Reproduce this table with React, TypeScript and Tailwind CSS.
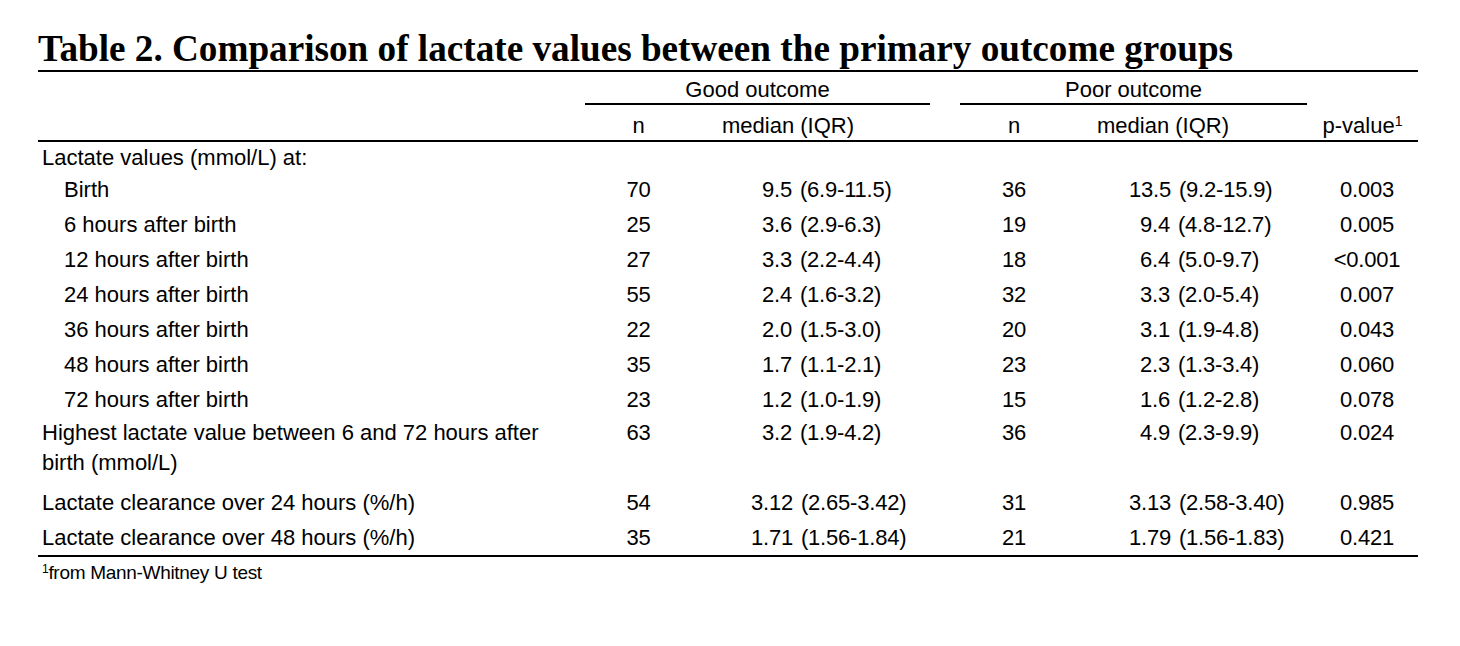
import React from "react";

type Row = {
  label: React.ReactNode;
  indent?: boolean;
  n1: string;
  m1: string;
  n2: string;
  m2: string;
  p: string;
  wide1?: boolean;
  wide2?: boolean;
};

const timeRows: Row[] = [
  { label: "Birth", indent: true, n1: "70", m1: "9.5 (6.9-11.5)", n2: "36", m2: "13.5 (9.2-15.9)", p: "0.003", wide2: true },
  { label: "6 hours after birth", indent: true, n1: "25", m1: "3.6 (2.9-6.3)", n2: "19", m2: "9.4 (4.8-12.7)", p: "0.005" },
  { label: "12 hours after birth", indent: true, n1: "27", m1: "3.3 (2.2-4.4)", n2: "18", m2: "6.4 (5.0-9.7)", p: "<0.001" },
  { label: "24 hours after birth", indent: true, n1: "55", m1: "2.4 (1.6-3.2)", n2: "32", m2: "3.3 (2.0-5.4)", p: "0.007" },
  { label: "36 hours after birth", indent: true, n1: "22", m1: "2.0 (1.5-3.0)", n2: "20", m2: "3.1 (1.9-4.8)", p: "0.043" },
  { label: "48 hours after birth", indent: true, n1: "35", m1: "1.7 (1.1-2.1)", n2: "23", m2: "2.3 (1.3-3.4)", p: "0.060" },
  { label: "72 hours after birth", indent: true, n1: "23", m1: "1.2 (1.0-1.9)", n2: "15", m2: "1.6 (1.2-2.8)", p: "0.078" },
];

const clearanceRows: Row[] = [
  { label: "Lactate clearance over 24 hours (%/h)", n1: "54", m1: "3.12 (2.65-3.42)", n2: "31", m2: "3.13 (2.58-3.40)", p: "0.985", wide1: true, wide2: true },
  { label: "Lactate clearance over 48 hours (%/h)", n1: "35", m1: "1.71 (1.56-1.84)", n2: "21", m2: "1.79 (1.56-1.83)", p: "0.421", wide1: true, wide2: true },
];

const cols = "grid grid-cols-[547px_107px_238px_30px_108px_239px_111px]";
const num = "tracking-[-0.2px] [word-spacing:2px]";

function DataRow({ row, className }: { row: Row; className: string }) {
  return (
    <div className={`${cols} ${className}`}>
      <div className={row.indent ? "pl-[26px]" : "pl-[4px]"}>{row.label}</div>
      <div className={`text-center ${num}`}>{row.n1}</div>
      <div className={`${num} ${row.wide1 ? "pl-[59px]" : "pl-[70px]"}`}>{row.m1}</div>
      <div />
      <div className={`text-center ${num}`}>{row.n2}</div>
      <div className={`${num} ${row.wide2 ? "pl-[61px]" : "pl-[72px]"}`}>{row.m2}</div>
      <div className={`text-center pl-[9px] ${num}`}>{row.p}</div>
    </div>
  );
}

export default function App() {
  return (
    <div className="min-h-screen w-full bg-white text-black">
      <div className="w-[1418px] pl-[38px] pt-[28px]">
        {/* title */}
        <h1 className="font-['Liberation_Serif',serif] font-bold text-[37.2px] leading-[42px] border-b-2 border-black whitespace-nowrap">
          Table 2. Comparison of lactate values between the primary outcome groups
        </h1>

        <div className="font-['Liberation_Sans',Arial,sans-serif] text-[22px] leading-[22px]">
          {/* group headers */}
          <div className={`${cols} pt-[7px]`}>
            <div />
            <div className="col-span-2 text-center pb-[2px] border-b-2 border-black">Good outcome</div>
            <div />
            <div className="col-span-2 text-center pb-[2px] border-b-2 border-black">Poor outcome</div>
            <div />
          </div>

          {/* column headers */}
          <div className={`${cols} pt-[10px] pb-[3px] border-b-2 border-black`}>
            <div />
            <div className="text-center">n</div>
            <div className="text-center pr-[46px]">median (IQR)</div>
            <div />
            <div className="text-center">n</div>
            <div className="text-center pr-[49px]">median (IQR)</div>
            <div className="text-center">
              p-value<sup className="text-[14px]">1</sup>
            </div>
          </div>

          {/* body */}
          <div className="pt-[5px] pl-[4px]">Lactate values (mmol/L) at:</div>
          <div className="pt-[3px]">
            {timeRows.map((r) => (
              <DataRow key={r.label as string} row={r} className="h-[35px] items-center" />
            ))}
          </div>
          <DataRow
            row={{
              label: (
                <>
                  Highest lactate value between 6 and 72 hours after
                  <br />
                  birth (mmol/L)
                </>
              ),
              n1: "63",
              m1: "3.2 (1.9-4.2)",
              n2: "36",
              m2: "4.9 (2.3-9.9)",
              p: "0.024",
            }}
            className="leading-[30px] pt-[1px] pb-[7px] items-start"
          />
          <div className="border-b-2 border-black">
            {clearanceRows.map((r) => (
              <DataRow key={r.label as string} row={r} className="h-[35px] items-center" />
            ))}
          </div>

          {/* footnote */}
          <div className="pl-[4px] pt-[6px] text-[19px] leading-[20px] tracking-[-0.3px]">
            <sup className="text-[12px]">1</sup>from Mann-Whitney U test
          </div>
        </div>
      </div>
    </div>
  );
}
